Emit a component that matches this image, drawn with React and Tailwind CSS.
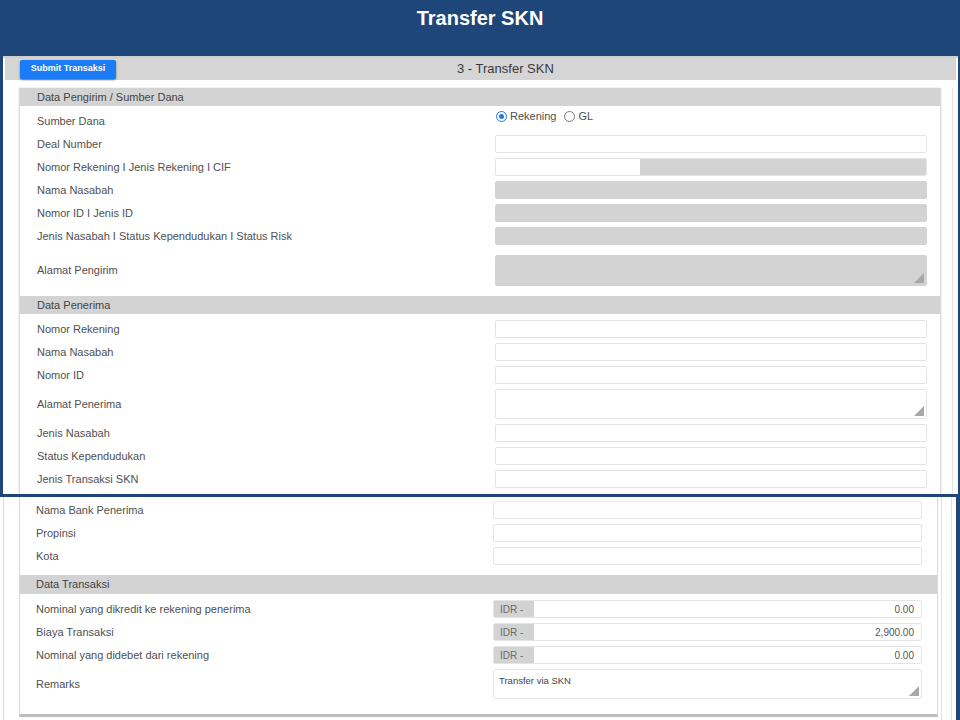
import React from 'react';

const font = "font-['Liberation_Sans',Arial,Helvetica,sans-serif]";

function Grip() {
  return (
    <svg className="absolute right-[2px] bottom-[2px]" width="10" height="10" viewBox="0 0 10 10">
      <polygon points="10,0 10,10 0,10" fill="#a8a8a8" />
    </svg>
  );
}

function Field({ kind = 'text', value, disabled, split, addon }) {
  if (split) {
    return (
      <div className="flex h-full w-full rounded-[2px] overflow-hidden border border-[#e4e4e4]">
        <div className="w-[144px] bg-white" />
        <div className="flex-1 bg-[#d3d3d3]" />
      </div>
    );
  }
  if (addon) {
    return (
      <div className="flex h-full w-full rounded-[2px] overflow-hidden border border-[#e4e4e4] bg-white">
        <div className="w-[40px] bg-[#d3d3d3] text-[#6b6b6b] text-[10px] flex items-center pl-[6px]">IDR -</div>
        <div className="flex-1 text-right pr-[7px] text-[10px] text-[#555] flex items-center justify-end">{value}</div>
      </div>
    );
  }
  return (
    <div
      className={
        'relative h-full w-full rounded-[2px] border ' +
        (disabled ? 'bg-[#d3d3d3] border-[#d3d3d3]' : 'bg-white border-[#e4e4e4]')
      }
    >
      {value && <div className="pl-[5px] pt-[4px] text-[9.5px] text-[#444]">{value}</div>}
      {kind === 'area' && <Grip />}
    </div>
  );
}

function Row({ label, h = 18, extra = '', labelPl = 'pl-[17px]', fieldW = 'w-[432px]', fieldMl = 'ml-[475px]', children, ...rest }) {
  return (
    <div className={'relative flex items-center ' + extra} style={{ height: h }}>
      <div className={'absolute left-0 text-[11px] text-[#505050] ' + labelPl}>{label}</div>
      <div className={'h-full ' + fieldMl + ' ' + fieldW}>{children || <Field {...rest} />}</div>
    </div>
  );
}

function SectionHead({ title, h = 'h-[18px]', pl = 'pl-[17px]' }) {
  return (
    <div className={'bg-[#d3d3d3] flex items-center text-[11px] text-[#444] ' + h + ' ' + pl}>{title}</div>
  );
}

function Radio({ on, label }) {
  return (
    <div className="flex items-center gap-[3px]">
      <span
        className={
          'w-[11px] h-[11px] rounded-full border flex items-center justify-center ' +
          (on ? 'border-[#2a78de]' : 'border-[#777]')
        }
      >
        {on && <span className="w-[5px] h-[5px] rounded-full bg-[#2a78de]" />}
      </span>
      <span className="text-[11px] text-[#505050]">{label}</span>
    </div>
  );
}

function TopShot() {
  return (
    <div className="ml-[3px] mr-[2px] h-[438px] overflow-hidden bg-white border-t-[2px] border-[#cfcfcf] flex flex-col">
      <div className="mx-[2px] h-[22px] bg-[#d5d5d5] flex items-center">
        <button className="ml-[15px] h-[19px] w-[96px] rounded-[2px] bg-[#1a7cf6] text-white text-[9px] font-bold shadow-[0_1px_2px_rgba(0,0,0,0.5)]">
          Submit Transaksi
        </button>
        <div className="ml-[341px] text-[13px] text-[#3a3a3a]">3 - Transfer SKN</div>
      </div>
      <div className="flex flex-1 pt-[8px]">
        <div className="ml-[16px] w-[922px] bg-white border-l border-r border-[#d9d9d9] shadow-[0_0_2px_rgba(0,0,0,0.15)]">
          <SectionHead title="Data Pengirim / Sumber Dana" />
          <div className="flex flex-col gap-[5px] pt-[6px] pb-[10px]">
            <Row label="Sumber Dana">
              <div className="flex items-center gap-[8px] pl-[1px] -mt-[4px]">
                <Radio on label="Rekening" />
                <Radio label="GL" />
              </div>
            </Row>
            <Row label="Deal Number" />
            <Row label="Nomor Rekening I Jenis Rekening I CIF" split />
            <Row label="Nama Nasabah" disabled />
            <Row label="Nomor ID I Jenis ID" disabled />
            <Row label="Jenis Nasabah I Status Kependudukan I Status Risk" disabled />
            <Row label="Alamat Pengirim" h={31} extra="mt-[5px]" disabled kind="area" />
          </div>
          <SectionHead title="Data Penerima" />
          <div className="flex flex-col gap-[5px] pt-[6px]">
            <Row label="Nomor Rekening" />
            <Row label="Nama Nasabah" />
            <Row label="Nomor ID" />
            <Row label="Alamat Penerima" h={30} kind="area" />
            <Row label="Jenis Nasabah" />
            <Row label="Status Kependudukan" />
            <Row label="Jenis Transaksi SKN" />
          </div>
        </div>
        <div className="ml-[11px] w-[1px] bg-[#e2e2e2]" />
      </div>
    </div>
  );
}

function BottomShot() {
  const rp = { labelPl: 'pl-[16px]', fieldW: 'w-[429px]', fieldMl: 'ml-[473px]' };
  return (
    <div className="h-[223px] mr-[2px] bg-white border-r-[2px] border-[#1f4678] overflow-hidden flex">
      <div className="ml-[3px] w-[1px] bg-[#dcdcdc]" />
      <div className="ml-[15px] w-[919px] flex flex-col">
        <div className="bg-white border-l border-r border-[#d9d9d9] border-b-[3px] border-b-[#bdbdbd]">
          <div className="flex flex-col gap-[5px] pt-[4px] pb-[10px]">
            <Row label="Nama Bank Penerima" {...rp} />
            <Row label="Propinsi" {...rp} />
            <Row label="Kota" {...rp} />
          </div>
          <SectionHead title="Data Transaksi" h="h-[19px]" pl="pl-[16px]" />
          <div className="flex flex-col gap-[5px] pt-[6px] pb-[15px]">
            <Row label="Nominal yang dikredit ke rekening penerima" {...rp} addon value="0.00" />
            <Row label="Biaya Transaksi" {...rp} addon value="2,900.00" />
            <Row label="Nominal yang didebet dari rekening" {...rp} addon value="0.00" />
            <Row label="Remarks" h={30} {...rp} kind="area" value="Transfer via SKN" />
          </div>
        </div>
      </div>
      <div className="ml-[3px] w-[1px] bg-[#e2e2e2]" />
      <div className="ml-[9px] w-[1px] bg-[#e2e2e2]" />
    </div>
  );
}

export default function App() {
  return (
    <div className={'w-[960px] h-[720px] bg-[#1f4678] overflow-hidden ' + font}>
      <div className="h-[56px] flex justify-center pt-[7px]">
        <h1 className="text-white font-bold text-[20px] leading-[23px]">Transfer SKN</h1>
      </div>
      <TopShot />
      <div className="h-[3px]" />
      <BottomShot />
    </div>
  );
}
